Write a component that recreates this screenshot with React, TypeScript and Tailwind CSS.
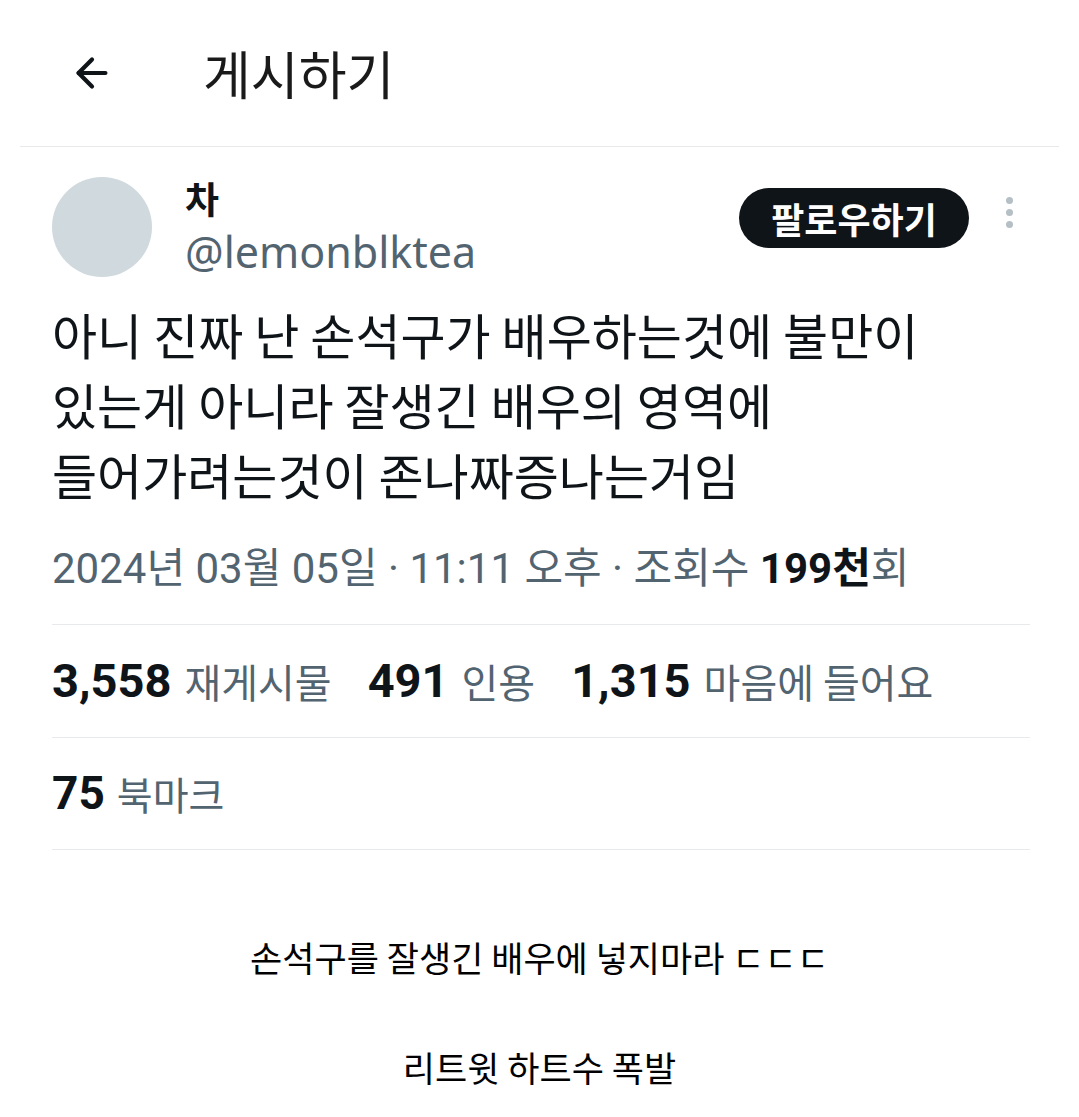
import { ArrowLeft } from "lucide-react";

const font = { fontFamily: '"Noto Sans CJK KR", "Noto Sans", sans-serif' };
const numFont = { fontFamily: 'Roboto, "Noto Sans CJK KR", sans-serif' };

const stats = [
  { value: "3,558", label: "재게시물" },
  { value: "491", label: "인용" },
  { value: "1,315", label: "마음에 들어요" },
];

export default function App() {
  return (
    <div className="w-[1079px] min-h-[1117px] bg-white text-[#0f1419]" style={font}>
      {/* Header */}
      <div className="mx-[20px] h-[147px] flex items-center border-b border-[#e7e9ec]">
        <ArrowLeft className="ml-[49px] w-[46px] h-[46px]" strokeWidth={2.2} />
        <h1 className="ml-[88px] text-[52px] leading-none font-normal text-[#1a1a1a]">게시하기</h1>
      </div>

      <div className="pl-[52px] pr-[49px]">
        {/* Author */}
        <div className="flex items-start pt-[30px]">
          <div className="w-[100px] h-[100px] rounded-full bg-[#cfd9de] shrink-0" />
          <div className="ml-[33px] flex-1 -mt-[4px]">
            <p className="text-[37px] leading-[50px] font-bold">차</p>
            <p
              className="mt-[4px] text-[43px] leading-[50px] text-[#536471]"
              style={{ fontFamily: '"Noto Sans", sans-serif' }}
            >
              @lemonblktea
            </p>
          </div>
          <button className="mt-[11px] h-[60px] w-[230px] rounded-full bg-[#0f1419] text-white text-[36px] font-bold leading-none">
            팔로우하기
          </button>
          <div className="ml-[37px] mr-[17px] mt-[20px] flex flex-col gap-[5px] items-center">
            <span className="w-[7px] h-[7px] rounded-full bg-[#b5bfc6]" />
            <span className="w-[7px] h-[7px] rounded-full bg-[#b5bfc6]" />
            <span className="w-[7px] h-[7px] rounded-full bg-[#b5bfc6]" />
          </div>
        </div>

        {/* Tweet text */}
        <p className="mt-[22px] text-[49px] leading-[70px] text-[#0f1419]">
          아니 진짜 난 손석구가 배우하는것에 불만이
          <br />
          있는게 아니라 잘생긴 배우의 영역에
          <br />
          들어가려는것이 존나짜증나는거임
        </p>

        {/* Date */}
        <p
          className="mt-[35px] pb-[30px] text-[42px] leading-[50px] text-[#536471] border-b border-[#e7e9ec]"
          style={numFont}
        >
          2024년 03월 05일 · 11:11 오후 · 조회수 <span className="font-bold text-[#0f1419]">199천</span>회
        </p>

        {/* Stats */}
        <div className="h-[113px] flex items-center gap-[36px] border-b border-[#e7e9ec]">
          {stats.map((s) => (
            <span key={s.label} className="flex items-center">
              <span className="font-bold text-[47px]" style={numFont}>{s.value}</span>
              <span className="ml-[13px] text-[40px] text-[#536471]">{s.label}</span>
            </span>
          ))}
        </div>
        <div className="h-[112px] flex items-center border-b border-[#e7e9ec]">
          <span className="font-bold text-[46px]" style={numFont}>75</span>
          <span className="ml-[12px] text-[39px] text-[#536471]">북마크</span>
        </div>
      </div>

      {/* Captions */}
      <div className="text-center text-black text-[35px] leading-[44px]">
        <p className="mt-[85px]">손석구를 잘생긴 배우에 넣지마라 ㄷㄷㄷ</p>
        <p className="mt-[66px]">리트윗 하트수 폭발</p>
      </div>
    </div>
  );
}
